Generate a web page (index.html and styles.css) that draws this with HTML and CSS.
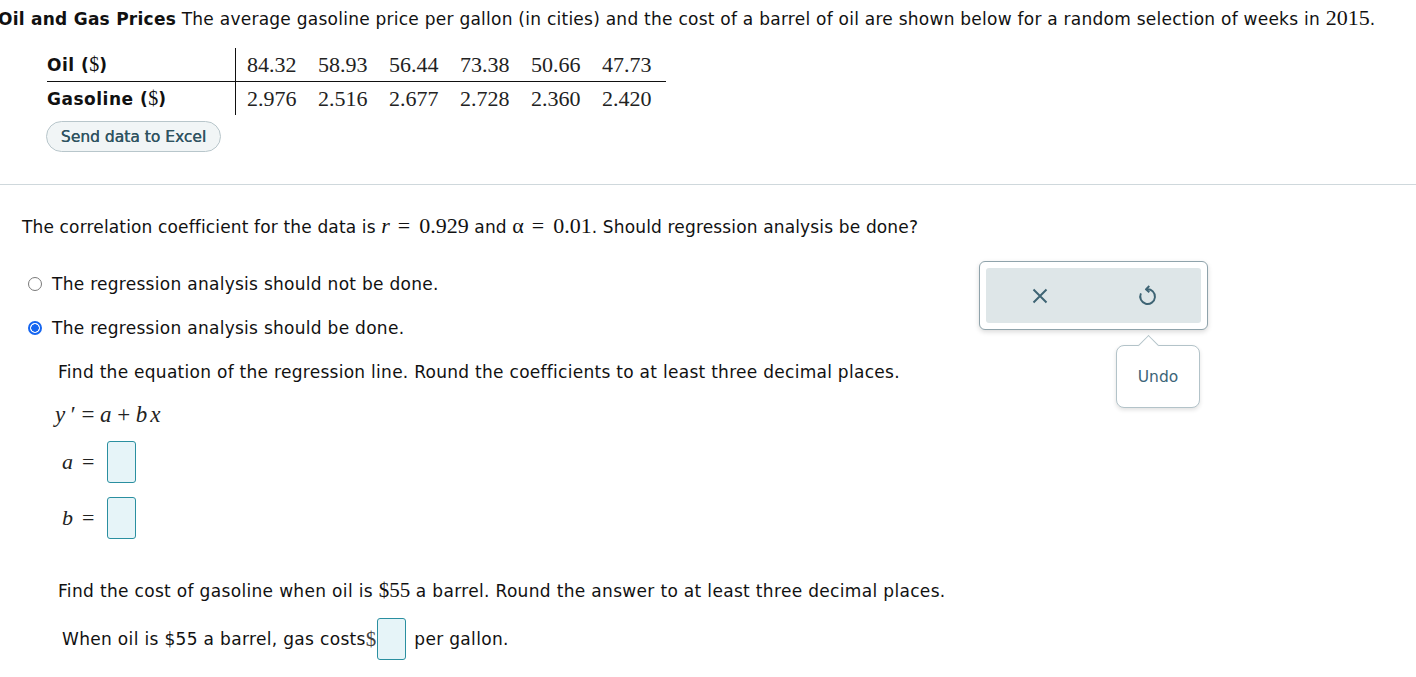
FILE: index.html
```html
<!DOCTYPE html>
<html>
<head>
<meta charset="utf-8">
<link rel="stylesheet" href="styles.css">
</head>
<body>
<div class="intro">
  <p class="lead"><b>Oil and Gas Prices</b> The average gasoline price per gallon (in cities) and the cost of a barrel of oil are shown below for a random selection of weeks in <span class="m yr">2015</span>.</p>
  <table class="data">
    <tr class="r1"><th>Oil (<span class="m">$</span>)</th><td>84.32</td><td>58.93</td><td>56.44</td><td>73.38</td><td>50.66</td><td>47.73</td></tr>
    <tr class="r2"><th>Gasoline (<span class="m">$</span>)</th><td>2.976</td><td>2.516</td><td>2.677</td><td>2.728</td><td>2.360</td><td>2.420</td></tr>
  </table>
  <button class="excel">Send data to Excel</button>
</div>
<hr class="sep">
<div class="question">
  <p class="q">The correlation coefficient for the data is <span class="m"><i>r</i><span class="rel">=</span>0.929</span> and <span class="m">α<span class="rel">=</span>0.01</span>. Should regression analysis be done?</p>
  <div class="opts">
    <label class="opt"><span class="radio"></span>The regression analysis should not be done.</label>
    <label class="opt"><span class="radio on"></span>The regression analysis should be done.</label>
  </div>
  <div class="sub">
    <p class="q2">Find the equation of the regression line. Round the coefficients to at least three decimal places.</p>
    <div class="eq"><i>y</i>&thinsp;′&thinsp;=&thinsp;<i>a</i>&thinsp;+&thinsp;<i>b</i>&#8202;<i>x</i></div>
    <div class="ans"><span class="var"><i>a</i></span><span class="eqs">=</span><span class="box"></span></div>
    <div class="ans"><span class="var"><i>b</i></span><span class="eqs">=</span><span class="box"></span></div>
    <p class="q3">Find the cost of gasoline when oil is <span class="m">$55</span> a barrel. Round the answer to at least three decimal places.</p>
    <p class="q4">When oil is $55 a barrel, gas costs<span class="m">$</span><span class="box inl"></span> per gallon.</p>
  </div>
</div>
<div class="tools">
  <div class="toolbar">
    <span class="tool"><svg width="20" height="20" viewBox="0 0 20 20"><path d="M3.5 3.5 L16.5 16.5 M16.5 3.5 L3.5 16.5" stroke="#3e6474" stroke-width="2" fill="none"/></svg></span>
    <span class="tool"><svg width="25" height="25" viewBox="0 0 22 22"><path d="M10.5 5.5 A6.5 6.5 0 1 1 5.2 9.2" stroke="#3e6474" stroke-width="1.7" fill="none"/><path d="M12.6 2.6 L9.6 5.6 L12.6 8.2" stroke="#3e6474" stroke-width="1.7" fill="none" stroke-linejoin="round"/></svg></span>
  </div>
</div>
<div class="tip">Undo</div>
</body>
</html>
```

FILE: styles.css
```css
body {
  margin: 0;
  font-family: "DejaVu Sans", Verdana, sans-serif;
  color: #111;
  background: #fff;
}
.m { font-family: "Liberation Serif", serif; font-size: 21px; letter-spacing: 0; }
.q .m { font-size: 22px; }
.rel { margin: 0 9px 0 8px; }
.lead {
  margin: 0 0 0 -2px;
  padding: 6px 0 0 0;
  font-size: 17px;
  letter-spacing: 0.25px;
  line-height: 24px;
}
.lead .yr { font-size: 22px; }
.data {
  border-collapse: collapse;
  margin: 17px 0 0 47px;
}
.data th {
  text-align: left;
  font-size: 17px;
  font-weight: bold;
  letter-spacing: 0.5px;
  width: 188px;
  padding: 0;
  border-right: 1px solid #111;
  height: 33px;
}
.data th .m { font-weight: normal; font-size: 20px; }
.data td {
  font-family: "Liberation Serif", serif;
  font-size: 22px;
  padding: 0 0 0 11px;
  color: #222;
  width: 60px;
}
.data td:last-child { padding-right: 4px; }
.data .r1 th, .data .r1 td { border-bottom: 1px solid #111; height: 33px; }
.excel {
  display: block;
  margin: 6px 0 0 46px;
  height: 31px;
  width: 175px;
  border: 1px solid #b8c6cb;
  border-radius: 16px;
  background: #f1f5f6;
  color: #2f5361;
  font-family: "DejaVu Sans", Verdana, sans-serif;
  font-size: 15.5px;
  font-weight: normal;
  letter-spacing: 0;
  padding: 0;
  text-shadow: 0.3px 0 0 #2f5361;
}
.sep {
  margin: 32px 0 0 0;
  border: 0;
  border-top: 1px solid #cfd8dc;
  height: 0;
}
.question { padding: 30px 0 0 22px; font-size: 17px; letter-spacing: 0.28px; }
.q { margin: 0; line-height: 22px; letter-spacing: 0.15px; }
.opts { margin-top: 24px; }
.opt {
  display: flex;
  align-items: center;
  height: 44px;
  padding-left: 6px;
}
.radio {
  width: 14px;
  height: 14px;
  border: 1px solid #7a7a7a;
  border-radius: 50%;
  margin-right: 10px;
  box-sizing: border-box;
}
.radio.on {
  border: 2px solid #1565f0;
  background: radial-gradient(circle, #1565f0 0 3.5px, #fff 4px);
}
.sub { padding-left: 36px; }
.q2 { margin: 11px 0 0 0; line-height: 22px; }
.eq {
  font-family: "Liberation Serif", serif;
  font-size: 23px;
  margin-top: 20px;
  margin-left: -3px;
  line-height: 24px;
  color: #222;
  letter-spacing: 0.5px;
}
.ans {
  display: flex;
  align-items: center;
  font-family: "Liberation Serif", serif;
  font-size: 22px;
  height: 42px;
  margin-top: 14px;
  color: #222;
}
.var { width: 20px; padding-left: 4px; }
.eqs { width: 25px; }
.box {
  display: inline-block;
  width: 27px;
  height: 40px;
  border: 1px solid #2a8fa0;
  border-radius: 3px;
  background: #e6f4f8;
}
.q3 { margin: 40px 0 0 0; line-height: 22px; letter-spacing: 0.33px; }
.q4 {
  margin: 16px 0 0 4px;
  display: flex;
  align-items: center;
  height: 42px;
  letter-spacing: 0.33px;
}
.q4 .m { color: #444; }
.box.inl { margin: 0 8px 0 1px; }
.tools {
  position: absolute;
  left: 979px;
  top: 261px;
  width: 229px;
  height: 69px;
  box-sizing: border-box;
  border: 1px solid #8fa3ab;
  border-radius: 6px;
  background: #fff;
  padding: 6px;
  box-shadow: 0 2px 5px rgba(0,0,0,0.15);
}
.toolbar {
  display: flex;
  height: 100%;
  background: #dee6e8;
  border-radius: 3px;
}
.tool {
  flex: 1;
  display: flex;
  align-items: center;
  justify-content: center;
}
.tool svg { display: block; }
.tip {
  position: absolute;
  left: 1116px;
  top: 345px;
  width: 84px;
  height: 63px;
  box-sizing: border-box;
  border: 1px solid #b3c3c9;
  border-radius: 8px;
  background: #fff;
  box-shadow: 0 2px 4px rgba(0,0,0,0.12);
  color: #3c6478;
  font-family: "DejaVu Sans", Verdana, sans-serif;
  font-size: 15.5px;
  display: flex;
  align-items: center;
  justify-content: center;
}
.tip::before {
  content: "";
  position: absolute;
  left: 24px;
  top: -8px;
  width: 14px;
  height: 14px;
  background: #fff;
  border-left: 1px solid #b3c3c9;
  border-top: 1px solid #b3c3c9;
  transform: rotate(45deg);
}
```
